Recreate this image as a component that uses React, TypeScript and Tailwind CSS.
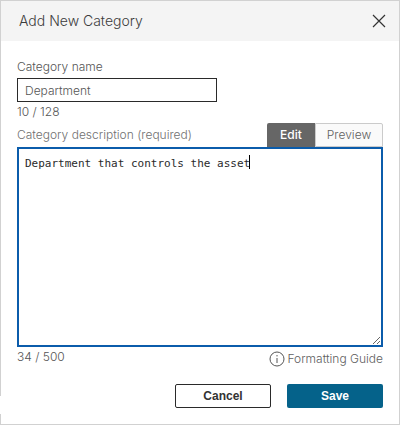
import { useState } from "react";

export default function App() {
  const [name, setName] = useState("Department");
  const [description, setDescription] = useState("Department that controls the asset");

  return (
    <main
      role="dialog"
      aria-labelledby="dialog-title"
      className="relative border border-[#d1d1d1] bg-white pb-4 font-['Inter','Liberation_Sans',sans-serif] text-xs font-light text-[#555555]"
    >
      <header className="flex h-10 items-center justify-between bg-[#f4f4f4] pr-3 pl-[18px]">
        <h1 id="dialog-title" className="text-sm font-light text-[#3c3c3c]">Add New Category</h1>
        <button type="button" aria-label="Close" className="p-px">
          <svg width="14" height="14" viewBox="0 0 14 14" fill="none" stroke="#333333" strokeWidth="1.2">
            <path d="M1 1L13 13M13 1L1 13" />
          </svg>
        </button>
      </header>

      <form className="px-4 pt-4" onSubmit={(e) => e.preventDefault()}>
        <label htmlFor="name" className="mb-px block h-5 leading-5">Category name</label>
        <input
          id="name"
          value={name}
          maxLength={128}
          onChange={(e) => setName(e.target.value)}
          className="block h-6 w-[200px] border border-[#2a2a2a] px-[7px] text-xs font-light outline-none"
        />
        <p className="h-5 leading-5">{name.length} / 128</p>

        <div className="flex h-[25px] items-end justify-between">
          <label htmlFor="description" className="h-6 leading-6 text-[#707070]">Category description (required)</label>
          <div className="flex h-6">
            <button type="button" className="w-12 rounded-tl-xs bg-[#666666] font-medium text-white">Edit</button>
            <button type="button" className="w-[68px] rounded-tr-xs border border-[#cbcbcb] bg-[#fafafa] font-light text-[#606060]">Preview</button>
          </div>
        </div>

        <div className="relative font-['DejaVu_Sans_Mono',monospace] text-[11px] font-normal leading-4 text-[#2a2a2a]">
          <textarea
            id="description"
            value={description}
            maxLength={500}
            spellCheck={false}
            onChange={(e) => setDescription(e.target.value)}
            className="block h-[200px] w-full resize border-2 border-[#0b5cab] px-1.5 py-[7px] outline-none"
          />
          <span className="pointer-events-none absolute top-2 left-2 h-[14px] w-[34ch] border-r border-black" />
        </div>

        <div className="flex items-start justify-between">
          <p className="h-5 leading-5">{description.length} / 500</p>
          <a href="#guide" className="flex h-6 items-center gap-0.5 text-[#606060]">
            <svg width="16" height="16" viewBox="0 0 16 16" fill="none" stroke="#555555">
              <circle cx="8" cy="8" r="7" />
              <path d="M8 7V12M8 4V5.4" />
            </svg>
            Formatting Guide
          </a>
        </div>

        <div className="mt-[13px] flex justify-end gap-4 font-['Liberation_Sans',sans-serif] font-bold">
          <button type="button" className="h-6 w-24 rounded-xs border border-[#2a2a2a] text-[#333333]">Cancel</button>
          <button type="submit" className="h-6 w-24 rounded-xs bg-[#05628a] text-white">Save</button>
        </div>
      </form>
      <span className="absolute bottom-[10px] -left-px h-[18px] w-px bg-white" />
    </main>
  );
}
